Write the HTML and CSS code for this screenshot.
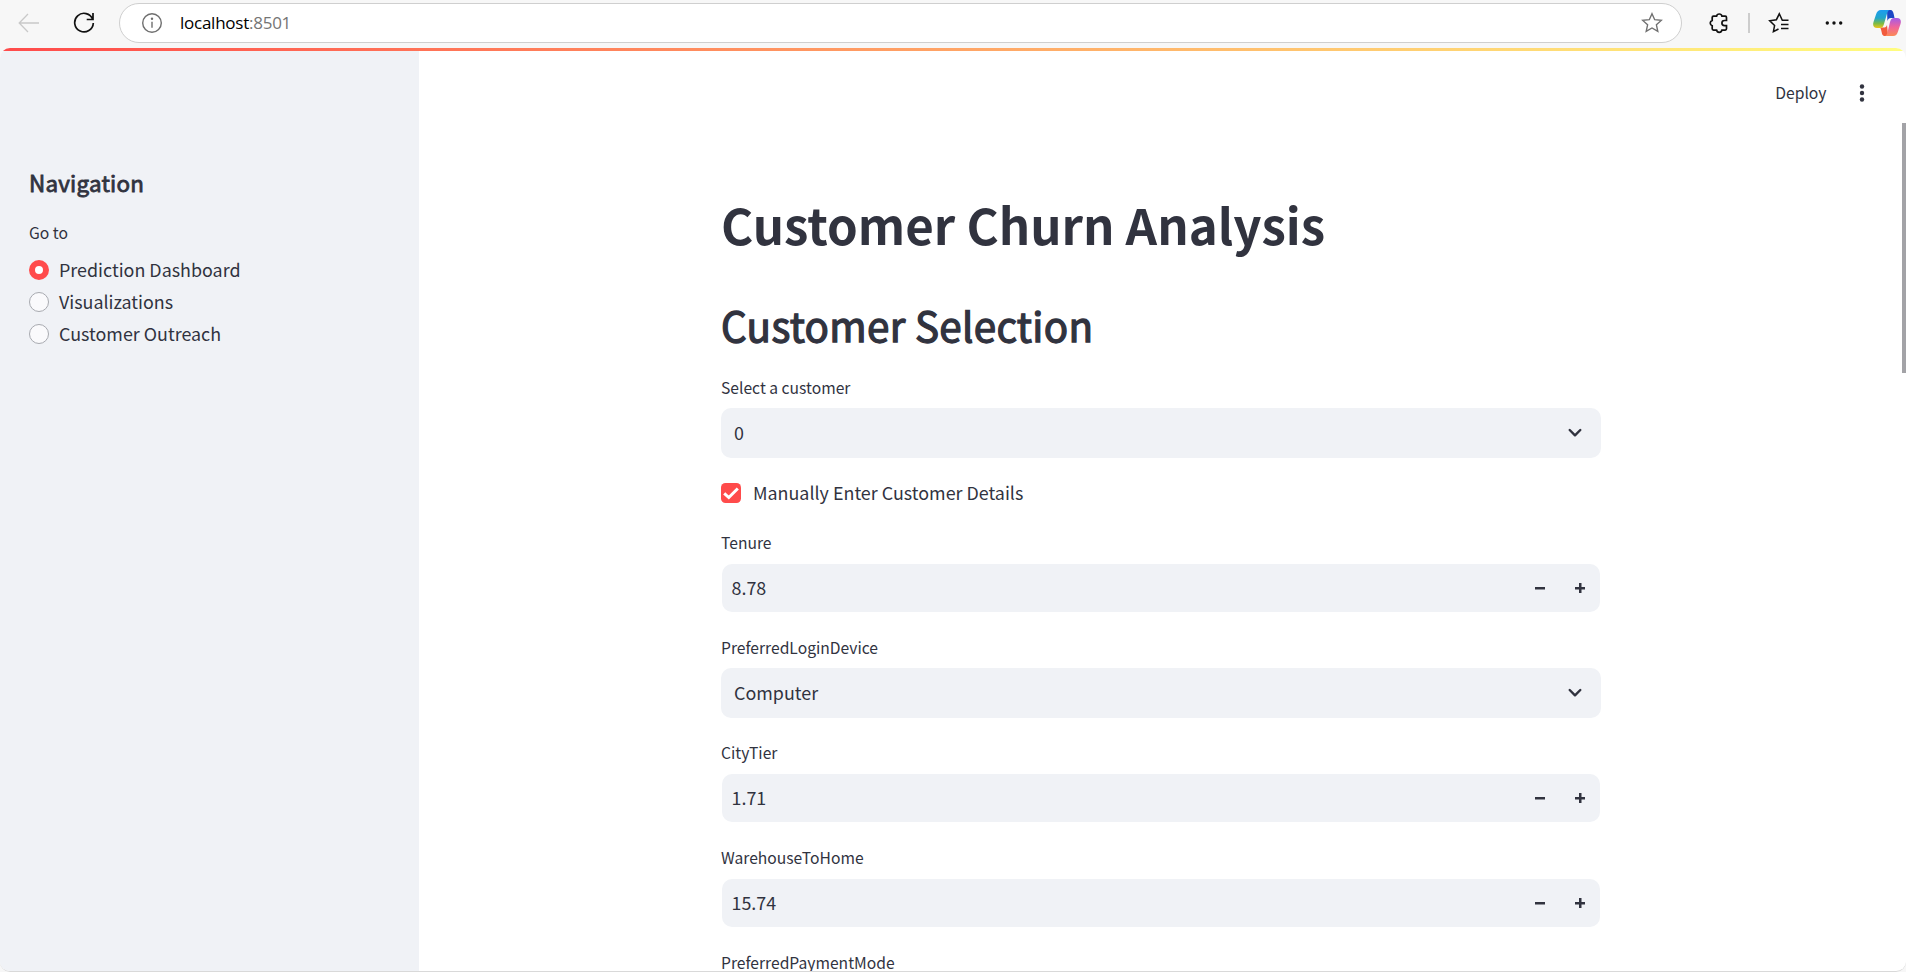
FILE: index.html
```html
<!DOCTYPE html>
<html lang="en">
<head>
<meta charset="utf-8">
<title>Customer Churn Analysis</title>
<link rel="stylesheet" href="styles.css">
</head>
<body>
<div class="browser">
  <header class="toolbar">
    <svg class="back" width="22" height="20" viewBox="0 0 22 20"><path d="M21 10H1.5M10 1L1.2 10l8.800 9"/></svg>
    <svg class="reload" width="22" height="22" viewBox="0 0 22 22"><path d="M19.700 7.300A9.300 9.300 0 1 0 20.300 11M20 1v6.500h-6.300"/></svg>
    <div class="address">
      <svg class="info" width="22" height="22" viewBox="0 0 22 22"><circle cx="11" cy="11" r="9.300"/><path d="M11 9.800v6"/><circle class="dot" cx="11" cy="6.800" r="1.200"/></svg>
      <span class="url">localhost<span class="port">:8501</span></span>
      <svg class="star" width="22" height="22" viewBox="0 0 22 22"><path d="M11 1.700l2.700 6 6.600.7-4.900 4.400 1.400 6.500L11 16l-5.800 3.300 1.400-6.500L1.700 8.400l6.600-.7z"/></svg>
    </div>
    <svg class="puzzle" width="22" height="22" viewBox="0 0 22 22"><path d="M5.500 4.200H8.600A2.700 2.700 0 0 1 13.900 4.200H17.200Q18.500 4.200 18.500 5.500V8.500H16.500A2.600 2.600 0 0 0 16.500 13.700H18.500V16.800Q18.500 18.100 17.200 18.100H13.900A2.700 2.700 0 0 1 8.600 18.100H5.500Q4.200 18.100 4.200 16.800V13.700A2.700 2.700 0 0 1 4.200 8.500V5.500Q4.200 4.200 5.500 4.200Z"/></svg>
    <span class="divider"></span>
    <svg class="favorites" width="22" height="22" viewBox="0 0 22 22"><path d="M20.500 8.200h-6.200L11.300 1.800 8.400 7.700l-6.700 1 4.900 4.700-1.200 6.300 5.100-2.700M13 12.500h7.500M13 16.500h7.500"/></svg>
    <svg class="more" width="18" height="6" viewBox="0 0 18 6"><circle cx="2.300" cy="3" r="1.700"/><circle cx="9" cy="3" r="1.700"/><circle cx="15.700" cy="3" r="1.700"/></svg>
    <svg class="copilot" width="28" height="26" viewBox="0 0 28 26">
      <defs>
        <linearGradient id="cool" x1="0" y1="0" x2="0" y2="1"><stop offset="0" stop-color="#1b9cf0"/><stop offset=".45" stop-color="#22a6c9"/><stop offset=".75" stop-color="#7dbb45"/><stop offset="1" stop-color="#f0c419"/></linearGradient>
        <linearGradient id="warm" x1="0" y1="0" x2="0" y2="1"><stop offset="0" stop-color="#a35be8"/><stop offset=".5" stop-color="#f0649b"/><stop offset="1" stop-color="#fb8a55"/></linearGradient>
      </defs>
      <path fill="#1b47c5" d="M14 0h3.500c2 0 2.600 1.600 3.300 4.500L21.500 8H18c-2 0-3 1-3.600 3z"/>
      <path fill="#f25b3d" d="M7 17.500h4.500c1.200 0 2-1 2.500-2.500l1 9.500c-.6 1-1.500 1.500-3 1.500-3 0-3-2.500-3.600-5-.3-1.500-.6-2.500-1.400-3.500z"/>
      <path fill="url(#cool)" d="M8 0h8.500c-1.500.5-2 2-2.600 4L11 14c-.8 2.600-1.700 4-4 4H4c-3.500 0-4.500-2.500-3.500-6L3 4.500C4 1.500 5.200 0 8 0z"/>
      <path fill="url(#warm)" d="M21 8h3c3.500 0 4.500 2.500 3.500 6L25 21.500c-1 3-2.200 4.500-5 4.500h-8c1.500-.5 2-2 2.600-4L17 12c.8-2.600 1.700-4 4-4z"/>
    </svg>
  </header>

  <div class="page">
    <div class="decoration"></div>
    <aside class="sidebar">
      <h3 class="nav-title">Navigation</h3>
      <p class="nav-label">Go to</p>
      <div class="radios">
        <label class="radio"><span class="ring ring-on"></span><span class="radio-text">Prediction Dashboard</span></label>
        <label class="radio"><span class="ring"></span><span class="radio-text">Visualizations</span></label>
        <label class="radio"><span class="ring"></span><span class="radio-text">Customer Outreach</span></label>
      </div>
    </aside>
    <main class="main">
      <div class="app-header">
        <span class="deploy">Deploy</span>
        <svg class="kebab" width="6" height="18" viewBox="0 0 6 18"><circle cx="3" cy="2.500" r="2.200"/><circle cx="3" cy="9" r="2.200"/><circle cx="3" cy="15.500" r="2.200"/></svg>
      </div>
      <div class="content">
        <h1 class="title">Customer Churn Analysis</h1>
        <h2 class="heading">Customer Selection</h2>
        <div class="form">
          <div class="field">
            <span class="label">Select a customer</span>
            <div class="select"><span class="choice">0</span><svg class="chevron" width="14" height="10" viewBox="0 0 14 10"><path d="M1.700 2L7 7.300 12.300 2"/></svg></div>
          </div>
          <div class="check-row">
            <span class="checkbox"><svg width="20" height="20" viewBox="0 0 20 20"><path d="M3.200 10.300L7.800 14.500 16.800 5.500"/></svg></span>
            <span class="check-text">Manually Enter Customer Details</span>
          </div>
          <div class="field">
            <span class="label">Tenure</span>
            <div class="number"><span class="value">8.78</span><span class="minus"></span><span class="plus"></span></div>
          </div>
          <div class="field">
            <span class="label">PreferredLoginDevice</span>
            <div class="select"><span class="choice">Computer</span><svg class="chevron" width="14" height="10" viewBox="0 0 14 10"><path d="M1.700 2L7 7.300 12.300 2"/></svg></div>
          </div>
          <div class="field">
            <span class="label">CityTier</span>
            <div class="number"><span class="value">1.71</span><span class="minus"></span><span class="plus"></span></div>
          </div>
          <div class="field">
            <span class="label">WarehouseToHome</span>
            <div class="number"><span class="value">15.74</span><span class="minus"></span><span class="plus"></span></div>
          </div>
          <div class="field"><span class="label">PreferredPaymentMode</span></div>
        </div>
      </div>
    </main>
    <div class="scrollbar"></div>
  </div>
</div>
</body>
</html>
```
FILE: styles.css
```css
* { box-sizing: border-box; }
body {
  margin: 0;
  background: #f7f7f7;
  color: #31333f;
  font-family: "Noto Sans CJK SC", "Noto Sans CJK JP", sans-serif;
  font-size: 17.9px;
  overflow: hidden;
}
h1, h2, h3, p { margin: 0; }
svg { display: block; flex: none; fill: none; }
.browser { display: flex; flex-direction: column; height: 972px; }

.toolbar { display: flex; align-items: center; height: 48px; padding: 0 0 2px 18px; flex: none; }
.back { stroke: #c9c9c9; stroke-width: 1.3; }
.reload { margin-left: 33px; stroke: #111; stroke-width: 1.7; }
.address {
  display: flex; align-items: center;
  width: 1563px; height: 40px; margin-left: 24px; padding: 0 18px 0 21px;
  border: 1px solid #cfcfcf; border-radius: 20px; background: #fff;
}
.info { stroke: #6e6e6e; stroke-width: 1.4; }
.info .dot { fill: #6e6e6e; stroke: none; }
.url { flex: 1; margin-left: 17px; color: #000; font: 17px/24px "Open Sans", sans-serif; letter-spacing: -0.25px; }
.port { color: #757575; }
.star { stroke: #707070; stroke-width: 1.4; }
.puzzle { margin-left: 26px; stroke: #111; stroke-width: 1.7; }
.divider { width: 2px; height: 20px; margin-left: 18px; background: #cdcdcd; }
.favorites { margin-left: 18px; stroke: #111; stroke-width: 1.5; }
.more { margin-left: 35px; fill: #111; }
.copilot { margin-left: 30px; }

.page {
  position: relative; display: flex; flex: 1; min-height: 0;
  border-bottom: 1px solid #d9d9d9; border-radius: 10px;
  background: #fff; overflow: hidden;
}
.decoration { position: absolute; top: 0; left: 0; right: 0; height: 3px; background: linear-gradient(90deg, #ff4b4b, #fffd80); }
.scrollbar { position: absolute; top: 75px; right: 0; width: 4px; height: 250px; background: #a3a3a7; }

.sidebar { width: 419px; padding: 119px 29px 0; background: #f0f2f6; flex: none; }
.nav-title { font-size: 22.4px; font-weight: 400; line-height: 30px; -webkit-text-stroke: 0.8px #31333f; letter-spacing: 0.22px; }
.nav-label { margin-top: 25px; font-size: 15.7px; line-height: 22px; }
.radios { display: flex; flex-direction: column; margin-top: 10px; }
.radio { display: flex; align-items: center; gap: 10px; height: 32px; }
.radio-text { padding-bottom: 2px; }
.ring { width: 20px; height: 20px; border: 1px solid #a8aab0; border-radius: 50%; background: #fafafc; }
.ring-on { border: 6px solid #ff4b4b; background: #fff; }

.main { flex: 1; }
.app-header { display: flex; align-items: center; justify-content: flex-end; height: 75px; padding: 15px 41.500px 0 0; }
.deploy { padding-bottom: 1px; font-size: 15.7px; line-height: 22px; }
.kebab { margin-left: 32px; fill: #31333f; }
.content { width: 880px; margin-left: 302px; padding-top: 68px; }
.title { font-size: 49.2px; font-weight: 700; line-height: 66px; white-space: nowrap; }
.heading { margin-top: 41px; font-size: 40.3px; font-weight: 400; line-height: 54px; white-space: nowrap; -webkit-text-stroke: 1.3px #31333f; letter-spacing: 0.33px; }
.form { display: flex; flex-direction: column; gap: 25px; margin-top: 26px; }
.field { display: flex; flex-direction: column; }
.label { height: 30px; font-size: 15.65px; line-height: 19px; }
.select { display: flex; align-items: center; justify-content: space-between; height: 50px; padding: 0 19px 0 13px; border-radius: 10px; background: #f0f2f6; }
.choice { padding-bottom: 2px; }
.chevron { stroke: #31333f; stroke-width: 2.4; stroke-linecap: round; stroke-linejoin: round; }
.check-row { display: flex; align-items: flex-start; gap: 12px; height: 25px; }
.checkbox { width: 20px; height: 20px; border-radius: 4.500px; background: #ff4b4b; }
.checkbox path { stroke: #fff; stroke-width: 3; }
.check-text { line-height: 18px; }
.number { display: flex; align-items: center; height: 48px; margin: 1px; padding: 0 15px 0 9.500px; border-radius: 10px; background: #f0f2f6; }
.value { flex: 1; padding-bottom: 2px; }
.minus, .plus { width: 10px; height: 10px; background: linear-gradient(#31333f, #31333f) center / 10px 2.500px no-repeat; }
.plus { margin-left: 30px; background: linear-gradient(#31333f, #31333f) center / 10px 2.500px no-repeat, linear-gradient(#31333f, #31333f) center / 2.500px 10px no-repeat; }
```
